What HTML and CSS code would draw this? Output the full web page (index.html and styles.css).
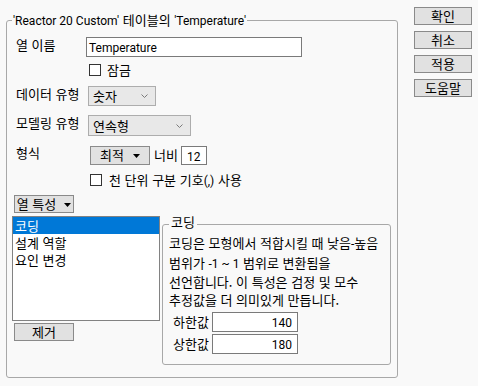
FILE: index.html
```html
<!DOCTYPE html>
<html lang="ko">
<head>
<meta charset="utf-8">
<link rel="stylesheet" href="styles.css">
</head>
<body>
<div class="page">
  <div class="group main">
    <div class="legend main-legend"><span class="lat">'Reactor 20 Custom'</span> 테이블의 <span class="lat">'Temperature'</span></div>

    <div class="row r-name">
      <span class="lbl">열 이름</span>
      <div class="field name"><span class="lat">Temperature</span></div>
    </div>

    <div class="row r-lock">
      <span class="cb"></span><span class="cb-text">잠금</span>
    </div>

    <div class="row r-dtype">
      <span class="lbl">데이터 유형</span>
      <div class="combo combo-num"><span>숫자</span><svg class="chev" width="7" height="4" viewBox="0 0 7 4"><polyline points="0.5,0.5 3.5,3.5 6.5,0.5" fill="none" stroke="#7a7a7a" stroke-width="1"/></svg></div>
    </div>

    <div class="row r-mtype">
      <span class="lbl">모델링 유형</span>
      <div class="combo combo-cont"><span>연속형</span><svg class="chev" width="7" height="4" viewBox="0 0 7 4"><polyline points="0.5,0.5 3.5,3.5 6.5,0.5" fill="none" stroke="#7a7a7a" stroke-width="1"/></svg></div>
    </div>

    <div class="row r-fmt">
      <span class="lbl">형식</span>
      <div class="btn menu fmt-btn"><span>최적</span><svg class="tri" width="7" height="4" viewBox="0 0 7 4"><polygon points="0,0 7,0 3.5,4" fill="#000"/></svg></div>
      <span class="width-lbl">너비</span>
      <div class="field w12"><span class="lat">12</span></div>
    </div>

    <div class="row r-thou">
      <span class="cb"></span><span class="cb-text">천 단위 구분 기호<span class="lat">(,)</span> 사용</span>
    </div>

    <div class="btn menu colprop"><span>열 특성</span><svg class="tri" width="7" height="4" viewBox="0 0 7 4"><polygon points="0,0 7,0 3.5,4" fill="#000"/></svg></div>

    <div class="bottom">
      <div class="leftcol">
        <div class="list">
          <div class="item sel">코딩</div>
          <div class="item">설계 역할</div>
          <div class="item">요인 변경</div>
        </div>
        <div class="btn remove">제거</div>
      </div>

      <div class="group coding">
        <div class="legend coding-legend">코딩</div>
        <p class="desc">코딩은 모형에서 적합시킬 때 낮음<span class="lat">-</span>높음<br>범위가 <span class="lat">-1 ~ 1</span> 범위로 변환됨을<br>선언합니다. 이 특성은 검정 및 모수<br>추정값을 더 의미있게 만듭니다.</p>
        <div class="kv kv-first"><span class="kv-lbl">하한값</span><div class="field num"><span class="lat">140</span></div></div>
        <div class="kv"><span class="kv-lbl">상한값</span><div class="field num"><span class="lat">180</span></div></div>
      </div>
    </div>
  </div>

  <div class="buttons">
    <div class="btn side">확인</div>
    <div class="btn side">취소</div>
    <div class="btn side">적용</div>
    <div class="btn side">도움말</div>
  </div>
</div>
</body>
</html>
```

FILE: styles.css
```css
* { box-sizing: border-box; }

html, body {
  margin: 0;
  background: #f9f9f9;
}

body {
  font-family: "Noto Sans CJK KR", "Noto Sans", sans-serif;
  font-size: 13px;
  line-height: 16px;
  color: #000;
}

.lat {
  font-family: Roboto, "Noto Sans", sans-serif;
  font-size: 12px;
}

.page {
  display: flex;
  align-items: flex-start;
  padding-left: 6px;
  width: 478px;
  height: 386px;
}

.group {
  position: relative;
  border: 1px solid #a8a8a8;
  border-radius: 3px;
}

.legend {
  position: absolute;
  background: #f9f9f9;
  white-space: nowrap;
  line-height: 16px;
}

.main {
  margin-top: 20px;
  width: 392px;
  height: 358px;
  padding: 16px 0 0 9px;
}

.main-legend {
  top: -9px;
  left: 5px;
  padding: 0 1px;
}

.row {
  display: flex;
  align-items: flex-start;
}

.lbl {
  width: 70px;
  flex: none;
  white-space: nowrap;
}

.field {
  background: #fff;
  border: 1px solid #7a7a7a;
  padding: 0 2px;
  line-height: 18px;
  white-space: nowrap;
}

.r-name { height: 20px; }
.name { width: 216px; height: 20px; }

.cb {
  width: 12px;
  height: 12px;
  border: 1px solid #333;
  background: #fff;
  flex: none;
  margin-top: 1px;
}

.cb-text {
  margin-left: 6px;
  line-height: 14px;
  white-space: nowrap;
}

.r-lock { margin-top: 6px; height: 14px; }
.r-lock .cb { margin-left: 73px; }

.combo {
  display: flex;
  align-items: center;
  justify-content: space-between;
  margin-left: 2px;
  background: #e8e8e8;
  border: 1px solid #adadad;
  padding: 0 7px 0 4px;
}

.r-dtype { margin-top: 9px; }
.combo-num { width: 68px; height: 20px; }

.r-mtype { margin-top: 9px; }
.combo-cont { width: 103px; height: 21px; }

.btn {
  background: #e1e1e1;
  border: 1px solid #8a8a8a;
  display: flex;
  align-items: center;
  justify-content: center;
  white-space: nowrap;
}

.menu .tri { margin-left: 9px; margin-top: 1px; }

.r-fmt { margin-top: 9px; height: 20px; align-items: center; }
.r-fmt .lbl { align-self: flex-start; margin-top: 0; }
.fmt-btn { margin-left: 4px; width: 60px; height: 19px; }
.width-lbl { margin-left: 4px; width: 27px; }
.w12 { width: 26px; height: 19px; line-height: 17px; padding-left: 5px; }

.r-thou { margin-top: 8px; height: 14px; }
.r-thou .cb { margin-left: 74px; }
.r-thou .cb-text { margin-left: 7px; }

.colprop {
  margin-top: 8px;
  margin-left: -2px;
  width: 60px;
  height: 18px;
}
.colprop .tri { margin-left: 8px; }

.bottom {
  display: flex;
  align-items: flex-start;
  margin-top: 3px;
  margin-left: -4px;
}

.leftcol {
  display: flex;
  flex-direction: column;
  width: 148px;
}

.list {
  width: 148px;
  height: 105px;
  background: #fff;
  border: 1px solid #828282;
}

.item {
  height: 17px;
  line-height: 17px;
  padding-left: 2px;
  white-space: nowrap;
}

.item.sel {
  background: #0078d7;
  color: #fff;
}

.remove {
  margin-top: 2px;
  margin-left: 2px;
  width: 60px;
  height: 18px;
}

.coding {
  margin-left: 2px;
  margin-top: 8px;
  width: 229px;
  height: 141px;
  padding: 9px 0 0 6px;
}

.coding-legend {
  top: -11px;
  left: 6px;
  padding: 0 2px;
}

.desc {
  margin: 0;
  line-height: 17.7px;
  white-space: nowrap;
}

.kv {
  display: flex;
  align-items: center;
  padding-left: 4px;
  margin-top: 2px;
}
.kv-first { margin-top: 3px; }

.kv-lbl { width: 39px; }

.num {
  width: 86px;
  height: 20px;
  text-align: right;
  padding-right: 5px;
}

.buttons {
  display: flex;
  flex-direction: column;
  gap: 6px;
  margin-left: 16px;
  padding-top: 7px;
}

.side {
  width: 58px;
  height: 18px;
}
```
